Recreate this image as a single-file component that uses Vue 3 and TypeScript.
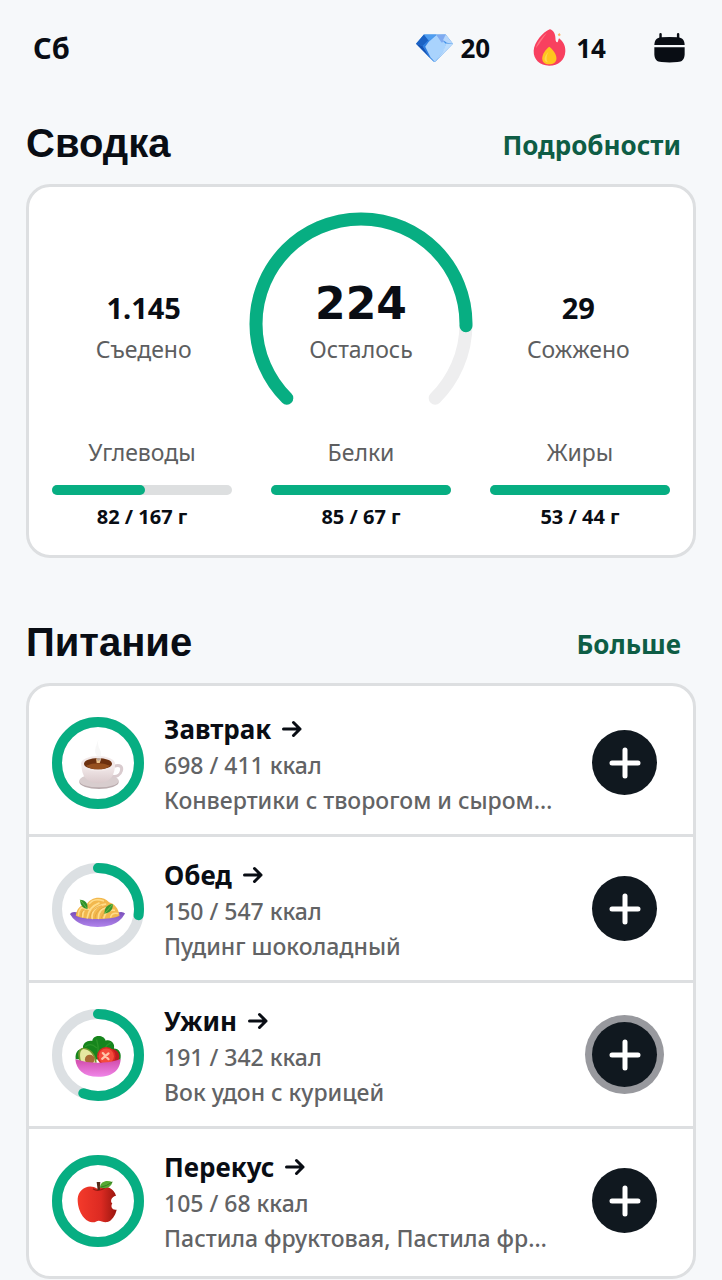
<script setup lang="ts">
interface Macro {
  name: string
  eaten: number
  goal: number
}

interface Meal {
  id: 'breakfast' | 'lunch' | 'dinner' | 'snack'
  name: string
  eaten: number
  goal: number
  foods: string
  active?: boolean
}

const macros: Macro[] = [
  { name: 'Углеводы', eaten: 82, goal: 167 },
  { name: 'Белки', eaten: 85, goal: 67 },
  { name: 'Жиры', eaten: 53, goal: 44 },
]

const meals: Meal[] = [
  { id: 'breakfast', name: 'Завтрак', eaten: 698, goal: 411, foods: 'Конвертики с творогом и сыром…' },
  { id: 'lunch', name: 'Обед', eaten: 150, goal: 547, foods: 'Пудинг шоколадный' },
  { id: 'dinner', name: 'Ужин', eaten: 191, goal: 342, foods: 'Вок удон с курицей', active: true },
  { id: 'snack', name: 'Перекус', eaten: 105, goal: 68, foods: 'Пастила фруктовая, Пастила фр…' },
]

const percent = (eaten: number, goal: number): number => Math.min(100, (eaten / goal) * 100)
</script>

<template>
  <main class="screen">
    <header class="topbar">
      <span class="day">Сб</span>
      <button class="stat" type="button" aria-label="Кристаллы: 20">
        <svg class="gem" viewBox="0 0 112 84" aria-hidden="true">
          <path d="M24 1H90L112 29 60 82Q56 86 52 82L0 29Z" fill="#3d8fe8" />
          <path d="M24 1 0 29 20 36 38 20Z" fill="#1b62c4" />
          <path d="M24 1H62L40 20Z" fill="#4f9df0" />
          <path d="M0 29 20 36 43 72 52 82Z" fill="#1553b4" />
          <path d="M38 18 20 36 36 63 56 84 46 50Z" fill="#2f7ee0" />
          <path d="M62 3 38 24 28 38 44 70 57 84 84 50 91 30Z" fill="#a9d3fd" />
          <path d="M62 3 90 1 85 24 77 25Z" fill="#7faaf0" />
          <path d="M90 1 112 29 93 26 82 18Z" fill="#b5d6fb" />
          <path d="M91 28 112 29 58 83 82 52Z" fill="#bcdcfc" />
        </svg>
        <span>20</span>
      </button>
      <button class="stat streak" type="button" aria-label="Серия дней: 14">
        <svg class="flame" viewBox="0 0 100 112" aria-hidden="true">
          <path d="M51 1C60 3 68 13 68 27 68 37 71 41 74 40 77 38 76 32 79 28 91 37 99 51 98 67 97 94 77 111 49 111 21 111 1 93 2 66 3 40 32 8 51 1Z" fill="#f8405f" />
          <path d="M42 11C29 21 12 41 9 58 17 48 30 28 42 11Z" fill="#ff7180" />
          <path d="M80 12 84 18 79 22 75 17Z" fill="#ffb25d" />
          <path d="M49 54C60 62 71 77 71 89 71 101 61 107 49 107 36 107 28 100 28 89 28 76 40 61 49 54Z" fill="#ffc51e" />
          <path d="M47 69C40 76 35 84 35 91 35 98 41 101 45 101 38 91 42 79 47 69Z" fill="#ffd64e" />
        </svg>
        <span>14</span>
      </button>
      <button class="calendar" type="button" aria-label="Календарь">
        <svg viewBox="0 0 90 86" aria-hidden="true">
          <path d="M19 3V17M70 3V17" stroke="#090d14" stroke-width="7" stroke-linecap="round" />
          <path d="M1 34C2 19 8 14 21 12Q45 10 69 12C82 14 88 19 89 34Z" fill="#090d14" />
          <path d="M1 41H89V62C88 77 82 83 68 84Q45 86 22 84C8 83 2 77 1 62Z" fill="#090d14" />
        </svg>
      </button>
    </header>

    <section aria-labelledby="summary-title">
      <div class="section-head">
        <h2 id="summary-title">Сводка</h2>
        <a href="#details">Подробности</a>
      </div>
      <div class="card summary">
        <div class="energy">
          <div class="figure">
            <strong>1.145</strong>
            <span>Съедено</span>
          </div>
          <div class="gauge">
            <svg viewBox="0 0 224 200" aria-hidden="true">
              <path class="gauge-track" d="M37.8 186.2A105 105 0 1 1 186.2 186.2" pathLength="270" />
              <path class="gauge-value" d="M37.8 186.2A105 105 0 1 1 186.2 186.2" pathLength="270" />
            </svg>
            <div class="figure remaining">
              <strong>224</strong>
              <span>Осталось</span>
            </div>
          </div>
          <div class="figure">
            <strong>29</strong>
            <span>Сожжено</span>
          </div>
        </div>
        <div class="macros">
          <div v-for="macro in macros" :key="macro.name" class="macro">
            <span class="macro-name">{{ macro.name }}</span>
            <div class="bar">
              <div class="bar-fill" :style="{ width: percent(macro.eaten, macro.goal) + '%' }"></div>
            </div>
            <strong>{{ macro.eaten }} / {{ macro.goal }} г</strong>
          </div>
        </div>
      </div>
    </section>

    <section class="nutrition" aria-labelledby="nutrition-title">
      <div class="section-head">
        <h2 id="nutrition-title">Питание</h2>
        <a href="#more">Больше</a>
      </div>
      <ul class="card meals">
        <li v-for="meal in meals" :key="meal.id" class="meal">
          <div class="badge">
            <svg class="ring" viewBox="0 0 92 92" aria-hidden="true">
              <circle class="ring-track" cx="46" cy="46" r="41" />
              <circle
                class="ring-value"
                cx="46"
                cy="46"
                r="41"
                pathLength="100"
                :stroke-dasharray="percent(meal.eaten, meal.goal) + ' 100'"
                transform="rotate(-90 46 46)"
              />
            </svg>

            <svg v-if="meal.id === 'breakfast'" class="food" viewBox="-6 -2 180 180" aria-hidden="true">
              <defs>
                <linearGradient id="cup" x1="0" y1="0" x2="0" y2="1">
                  <stop offset="0" stop-color="#f6eeee" />
                  <stop offset="1" stop-color="#d9c9cb" />
                </linearGradient>
              </defs>
              <ellipse cx="87" cy="145" rx="59" ry="21" fill="#b9abad" />
              <ellipse cx="87" cy="141" rx="59" ry="20" fill="#d8cdce" />
              <path d="M132 98C151 91 158 100 154 112 151 124 139 130 126 128" fill="none" stroke="#d9cbce" stroke-width="9" />
              <path d="M34 92C35 126 48 148 84 149 120 148 135 126 135 92Z" fill="url(#cup)" />
              <ellipse cx="84" cy="90" rx="51" ry="23" fill="#f2e9e9" />
              <ellipse cx="84" cy="90" rx="42" ry="17" fill="#6c300f" />
              <path d="M48 96Q84 82 120 96 108 107 84 107 60 107 48 96Z" fill="#96501f" />
              <path d="M85 17C80 42 94 48 93 61 92 70 97 77 88 88 81 85 78 78 80 65 69 54 80 35 85 17Z" fill="#f2f2f1" opacity="0.6" />
              <path d="M78 73Q86 91 92 73L89 88H80Z" fill="#edc590" />
            </svg>

            <svg v-else-if="meal.id === 'lunch'" class="food" viewBox="-2 -5 184 184" aria-hidden="true">
              <defs>
                <linearGradient id="plate" x1="0" y1="0" x2="0" y2="1">
                  <stop offset="0" stop-color="#7a50bb" />
                  <stop offset="1" stop-color="#b084ec" />
                </linearGradient>
              </defs>
              <path d="M4 102Q10 94 24 97H154Q167 94 173 101 158 128 131 136 89 148 46 136 17 125 4 102Z" fill="url(#plate)" />
              <path d="M22 108C24 84 40 72 54 75 65 50 104 44 124 66 139 70 154 84 156 108 131 121 47 121 22 108Z" fill="#f2b84e" />
              <g fill="none" stroke="#ffdc8a" stroke-width="5" stroke-linecap="round">
                <path d="M30 106C31 87 40 80 47 84M43 111C43 92 51 82 62 88M57 114C60 93 69 78 93 69M72 116C70 91 86 77 113 72M91 116C91 95 103 81 124 82M108 114C113 96 124 88 140 91M129 111C131 102 139 98 150 101" />
                <path d="M64 70C73 59 90 56 106 62" />
              </g>
              <g fill="none" stroke="#dc9a38" stroke-width="2">
                <path d="M38 110C38 96 44 88 51 91M66 115C65 96 80 82 102 77M81 117C81 98 96 83 120 78M100 116C105 98 117 86 132 87" />
              </g>
              <path d="M35 59C52 59 61 73 57 87 43 86 35 74 35 59Z" fill="#2f8f2c" />
              <path d="M35 59Q45 69 57 87" fill="none" stroke="#63b844" stroke-width="3" />
              <path d="M135 72C119 73 109 84 110 101 127 100 137 88 135 72Z" fill="#39962f" />
              <path d="M135 72Q124 86 110 101" fill="none" stroke="#6abd48" stroke-width="3" />
            </svg>

            <svg v-else-if="meal.id === 'dinner'" class="food" viewBox="-9 -13 188 188" aria-hidden="true">
              <defs>
                <linearGradient id="bowl" x1="0" y1="0" x2="0" y2="1">
                  <stop offset="0" stop-color="#d14ba9" />
                  <stop offset="1" stop-color="#ef85e8" />
                </linearGradient>
              </defs>
              <path d="M15 94C13 75 22 62 38 61 36 44 52 34 67 37 68 17 104 15 109 36 125 31 139 44 135 61 151 61 160 76 155 96Z" fill="#16851d" />
              <path d="M46 54Q63 41 80 58M81 34Q87 52 85 71M124 43Q111 50 105 62" fill="none" stroke="#2b962a" stroke-width="4" stroke-linecap="round" />
              <circle cx="128" cy="86" r="24" fill="#bd1b20" />
              <circle cx="111" cy="85" r="29" fill="#db2924" />
              <circle cx="111" cy="85" r="24" fill="#f44a3c" />
              <path d="M100 75 118 94M118 76 98 93" stroke="#ffc3a8" stroke-width="7" stroke-linecap="round" />
              <path d="M29 105C20 83 20 60 38 58 60 57 79 78 81 105Z" fill="#70982e" />
              <path d="M33 106C26 83 27 64 40 62 59 63 74 82 76 106Z" fill="#e6e8a1" />
              <circle cx="59" cy="95" r="15" fill="#a96b35" />
              <path d="M14 94Q50 106 86 105 121 106 156 94C154 125 135 149 86 149 38 149 17 126 14 94Z" fill="url(#bowl)" />
            </svg>

            <svg v-else class="food" viewBox="-5 0 180 180" aria-hidden="true">
              <defs>
                <linearGradient id="apple">
                  <stop offset="0" stop-color="#f43a2b" />
                  <stop offset="0.6" stop-color="#dc2a22" />
                  <stop offset="1" stop-color="#98160f" />
                </linearGradient>
              </defs>
              <path d="M83 53C58 36 26 53 24 83 23 118 43 151 67 154 77 155 82 149 87 149 94 149 102 155 113 153 127 149 137 133 141 116 129 119 121 108 128 97 121 92 124 77 139 74 131 49 105 41 83 53Z" fill="url(#apple)" />
              <path d="M70 53Q84 64 106 51" fill="none" stroke="#8d1a12" stroke-width="4" />
              <path d="M81 33H92Q90 45 91 57H84Z" fill="#542b18" />
              <path d="M91 49C92 31 111 26 128 33 126 48 108 56 91 49Z" fill="#55a832" />
              <path d="M92 49Q110 46 128 33" fill="none" stroke="#347b24" stroke-width="3" />
            </svg>
          </div>
          <div class="meal-text">
            <a :href="'#' + meal.id" class="meal-name">
              {{ meal.name }}
              <svg viewBox="0 0 20 18" aria-hidden="true"><path d="M1.5 9H18M11.5 2.5 18 9 11.5 15.5" /></svg>
            </a>
            <span>{{ meal.eaten }} / {{ meal.goal }} ккал</span>
            <span class="foods">{{ meal.foods }}</span>
          </div>
          <button class="add" :class="{ active: meal.active }" type="button" :aria-label="'Добавить: ' + meal.name">
            <svg viewBox="0 0 32 32" aria-hidden="true"><path d="M16 3V29M3 16H29" /></svg>
          </button>
        </li>
      </ul>
    </section>
  </main>
</template>

<style>
body {
  margin: 0;
  background: #f6f8fa;
}
</style>

<style scoped>
.screen {
  box-sizing: border-box;
  padding: 0 26px;
  color: #090d14;
  font-family: "Noto Sans", sans-serif;
}
button {
  padding: 0;
  border: 0;
  background: none;
  color: inherit;
  font: inherit;
  cursor: pointer;
}
a {
  color: inherit;
  text-decoration: none;
}
svg {
  display: block;
}
.topbar {
  display: flex;
  align-items: center;
  height: 95px;
  padding: 0 11px 0 7px;
  font-size: 26px;
  font-weight: 700;
}
.day {
  margin-right: auto;
  font-size: 29px;
}
.stat {
  display: flex;
  align-items: center;
  gap: 8px;
}
.streak {
  gap: 10px;
  margin-left: 43px;
}
.gem {
  width: 37px;
  height: 28px;
}
.flame {
  width: 33px;
  height: 37px;
}
.calendar {
  margin-left: 48px;
}
.calendar svg {
  width: 31px;
  height: 30px;
}
.section-head {
  display: flex;
  align-items: center;
  justify-content: space-between;
  margin: 24px 15px 17px 0;
}
.section-head h2 {
  margin: 0;
  font: 700 40px/48px "Liberation Sans", Arial, sans-serif;
}
.section-head a {
  padding-top: 4px;
  color: #0e5d45;
  font-size: 26px;
  font-weight: 700;
  line-height: 36px;
}
.card {
  border: 3px solid #dddfe1;
  border-radius: 24px;
  background: #fff;
}
.summary {
  padding: 25px 0 24px;
}
.energy {
  display: grid;
  grid-template-columns: repeat(3, minmax(0, 1fr));
  padding: 0 6px;
}
.figure {
  display: flex;
  flex-direction: column;
  align-items: center;
  padding-top: 76px;
}
.figure strong {
  font-size: 29px;
  font-weight: 700;
  line-height: 40px;
}
.figure span,
.macro-name {
  color: #5d5e60;
  font-size: 23px;
  line-height: 42px;
}
.gauge {
  display: grid;
  justify-content: center;
}
.gauge > * {
  grid-area: 1 / 1;
}
.gauge svg {
  width: 224px;
  height: 200px;
}
.gauge path {
  fill: none;
  stroke-width: 13;
}
.gauge .gauge-track {
  stroke: #eeeeef;
  stroke-linecap: round;
}
.gauge .gauge-value {
  stroke: #07ae82;
  stroke-linecap: round;
  stroke-dasharray: 226 270;
}
.figure.remaining {
  padding-top: 68px;
}
.remaining strong {
  font-family: "DejaVu Sans", sans-serif;
  font-size: 44px;
  font-weight: 700;
  line-height: 48px;
}
.macros {
  display: grid;
  grid-template-columns: repeat(3, 1fr);
  gap: 39px;
  padding: 19px 23px 0;
}
.macro {
  display: flex;
  flex-direction: column;
  align-items: center;
}
.bar {
  box-sizing: border-box;
  width: 100%;
  height: 10px;
  margin: 12px 0 8px;
  padding-left: 10px;
  border-radius: 5px;
  background: #dddfe0;
}
.bar-fill {
  box-sizing: content-box;
  height: 100%;
  margin-left: -10px;
  padding-left: 10px;
  border-radius: 5px;
  background: #07ae82;
}
.macro strong {
  font-size: 20px;
  font-weight: 700;
  line-height: 28px;
}
.nutrition .section-head {
  margin-top: 60px;
}
.meals {
  margin: 0;
  padding: 5px 0 4px;
  list-style: none;
}
.meal {
  display: flex;
  align-items: center;
  height: 143px;
  padding: 0 36px 0 23px;
}
.meal + .meal {
  border-top: 3px solid #dddfe1;
}
.badge {
  display: grid;
  flex: none;
  place-items: center;
}
.badge > * {
  grid-area: 1 / 1;
}
.ring {
  width: 92px;
  height: 92px;
}
.ring circle {
  fill: none;
  stroke-width: 10;
}
.ring .ring-track {
  stroke: #dce0e3;
}
.ring .ring-value {
  stroke: #07ae82;
  stroke-linecap: round;
}
.food {
  width: 60px;
  height: 60px;
}
.meal-text {
  display: flex;
  flex: 1;
  flex-direction: column;
  align-items: flex-start;
  min-width: 0;
  margin: 3px 20px 0;
  color: #626365;
  font-size: 23px;
  font-weight: 500;
  line-height: 35px;
}
.meal-name {
  display: flex;
  align-items: center;
  gap: 11px;
  color: #090d14;
  font-size: 26px;
  font-weight: 700;
  line-height: 38px;
}
.meal-name svg {
  width: 20px;
  height: 18px;
}
.meal-name path {
  fill: none;
  stroke: currentColor;
  stroke-width: 3;
  stroke-linecap: round;
  stroke-linejoin: round;
}
.foods {
  max-width: 100%;
  overflow: hidden;
  text-overflow: ellipsis;
  white-space: nowrap;
}
.add {
  display: grid;
  flex: none;
  place-items: center;
  width: 65px;
  height: 65px;
  border-radius: 50%;
  background: #10181f;
}
.add.active {
  box-shadow: 0 0 0 7px #98999e;
}
.add svg {
  width: 32px;
  height: 32px;
}
.add path {
  stroke: #fff;
  stroke-width: 5;
  stroke-linecap: round;
}
</style>
